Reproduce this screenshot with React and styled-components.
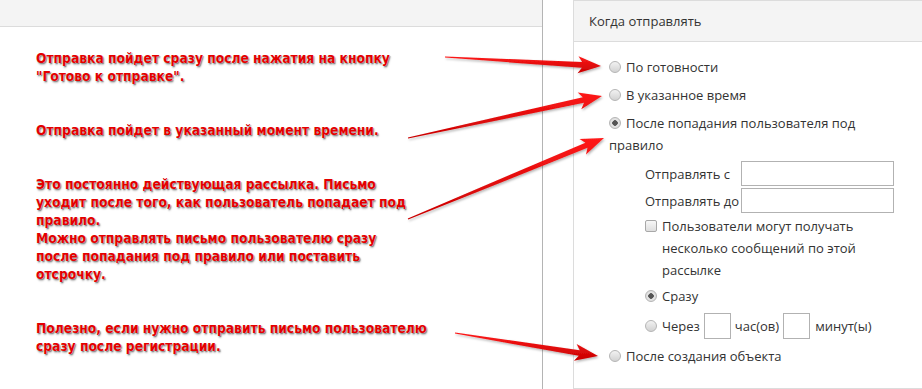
import React from "react";
import styled, { createGlobalStyle } from "styled-components";

const GlobalStyle = createGlobalStyle`
  html, body {
    margin: 0;
    padding: 0;
    background: #fff;
    overflow: hidden;
  }
  body {
    font-family: "Open Sans", "Liberation Sans", sans-serif;
  }
`;

const Page = styled.div`
  position: relative;
  display: flex;
  flex-direction: row;
  width: 922px;
  height: 389px;
  overflow: hidden;
`;

const LeftColumn = styled.div`
  display: flex;
  flex-direction: column;
  width: 542px;
  flex-shrink: 0;
  border-right: 1px solid #b4b4b4;
`;

const TopBand = styled.div`
  height: 26px;
  background: #f4f4f4;
  border-bottom: 1px solid #dcdcdc;
`;

const Notes = styled.div`
  display: flex;
  flex-direction: column;
  gap: 36px;
  padding: 22px 0 0 36px;
`;

const Note = styled.div`
  font-family: "DejaVu Sans Condensed", "Liberation Sans Narrow", "DejaVu Sans", sans-serif;
  font-weight: bold;
  font-size: 13.7px;
  line-height: 18px;
  color: #e30000;
  white-space: nowrap;
  text-shadow: 0 0 1px #fff, 1px 1px 1px rgba(0, 0, 0, 0.4),
    1px 2px 2px rgba(0, 0, 0, 0.25);
`;

const Panel = styled.div`
  margin-left: 30px;
  width: 380px;
  height: 387px;
  flex-shrink: 0;
  border: 1px solid #dcdcdc;
`;

const PanelHeader = styled.div`
  height: 40px;
  display: flex;
  align-items: center;
  padding-left: 15px;
  background: #f4f4f4;
  border-bottom: 1px solid #dcdcdc;
  font-size: 13px;
  color: #333;
`;

const PanelBody = styled.div`
  width: 296px;
  padding: 14px 0 0 35px;
  font-size: 13px;
  line-height: 22px;
  color: #333;
`;

const Option = styled.div`
  margin-bottom: 6px;
  min-height: ${(props) => (props.tall ? `26px` : `22px`)};
  display: ${(props) => (props.tall ? `flex` : `block`)};
  align-items: center;
`;

const Radio = styled.span`
  display: inline-block;
  box-sizing: border-box;
  width: 12px;
  height: 12px;
  margin-right: 5px;
  vertical-align: -1px;
  border-radius: 50%;
  border: 1px solid #b5b5b5;
  background: ${(props) =>
    props.checked
      ? `radial-gradient(circle at 50% 50%, #555 0, #555 2.5px, #e6e6e6 3px, #d4d4d4 100%)`
      : `linear-gradient(#f2f2f2, #d2d2d2)`};
`;

const SubBlock = styled.div`
  padding-left: 36px;
  padding-top: 5px;
`;

const FieldRow = styled.div`
  display: flex;
  align-items: center;
  margin-bottom: 2px;
`;

const FieldLabel = styled.span`
  min-width: 95px;
  white-space: nowrap;
  flex-shrink: 0;
  margin-right: 1px;
`;

const TextBox = styled.div`
  box-sizing: border-box;
  flex-shrink: 0;
  width: ${(props) => props.width || `153px`};
  height: ${(props) => props.height || `25px`};
  border: 1px solid #b2b2b2;
  background: #fff;
  margin: ${(props) => props.margin || `0`};
`;

const CheckRow = styled.div`
  display: flex;
  align-items: flex-start;
  margin-bottom: 4px;
`;

const Check = styled.span`
  box-sizing: border-box;
  flex-shrink: 0;
  width: 12px;
  height: 12px;
  margin: 5px 5px 0 0;
  border: 1px solid #a8a8a8;
  border-radius: 2px;
  background: linear-gradient(#f7f7f7, #dedede);
`;

const CheckText = styled.span`
  flex: 1;
`;

const ArrowLayer = styled.svg`
  position: absolute;
  left: 0;
  top: 0;
  pointer-events: none;
`;

const arrowPoints = (x1, y1, x2, y2) => {
  const dx = x2 - x1;
  const dy = y2 - y1;
  const len = Math.hypot(dx, dy);
  const ux = dx / len;
  const uy = dy / len;
  const nx = -uy;
  const ny = ux;
  const head = 19;
  const pts = [
    [0, -0.6],
    [len - head, -2.8],
    [len - head - 4, -8.5],
    [len, 0],
    [len - head - 4, 8.5],
    [len - head, 2.8],
    [0, 0.6],
  ];
  return pts
    .map(([a, b]) => `${(x1 + ux * a + nx * b).toFixed(1)},${(y1 + uy * a + ny * b).toFixed(1)}`)
    .join(" ");
};

const arrows = [
  [445, 57, 601, 66],
  [408, 138, 602, 96],
  [408, 219, 604, 138],
  [455, 333, 598, 356],
];

const notes = [
  [`Отправка пойдет сразу после нажатия на кнопку`, `"Готово к отправке".`],
  [`Отправка пойдет в указанный момент времени.`],
  [
    `Это постоянно действующая рассылка. Письмо`,
    `уходит после того, как пользователь попадает под`,
    `правило.`,
    `Можно отправлять письмо пользователю сразу`,
    `после попадания под правило или поставить`,
    `отсрочку.`,
  ],
  [`Полезно, если нужно отправить письмо пользователю`, `сразу после регистрации.`],
];

const App = () => {
  return (
    <>
      <GlobalStyle />
      <Page>
        <LeftColumn>
          <TopBand />
          <Notes>
            {notes.map((lines, idx) => (
              <Note key={idx}>
                {lines.map((line, i) => (
                  <React.Fragment key={i}>
                    {line}
                    {i < lines.length - 1 && <br />}
                  </React.Fragment>
                ))}
              </Note>
            ))}
          </Notes>
        </LeftColumn>

        <Panel>
          <PanelHeader>Когда отправлять</PanelHeader>
          <PanelBody>
            <Option>
              <Radio />
              По готовности
            </Option>
            <Option>
              <Radio />
              В указанное время
            </Option>
            <Option>
              <Radio checked />
              После попадания пользователя под правило
              <SubBlock>
                <FieldRow>
                  <FieldLabel>Отправлять с</FieldLabel>
                  <TextBox />
                </FieldRow>
                <FieldRow>
                  <FieldLabel>Отправлять до</FieldLabel>
                  <TextBox />
                </FieldRow>
                <CheckRow>
                  <Check />
                  <CheckText>
                    Пользователи могут получать несколько сообщений по этой
                    рассылке
                  </CheckText>
                </CheckRow>
                <Option>
                  <Radio checked />
                  Сразу
                </Option>
                <Option tall>
                  <Radio />
                  Через
                  <TextBox width={`27px`} height={`26px`} margin={`0 4px 0 4px`} />
                  час(ов)
                  <TextBox width={`27px`} height={`26px`} margin={`0 5px 0 4px`} />
                  минут(ы)
                </Option>
              </SubBlock>
            </Option>
            <Option>
              <Radio />
              После создания объекта
            </Option>
          </PanelBody>
        </Panel>

        <ArrowLayer width="922" height="389" viewBox="0 0 922 389">
          <defs>
            <filter id="arrowShadow" x="-10%" y="-50%" width="120%" height="200%">
              <feDropShadow dx="1" dy="1.5" stdDeviation="1" floodColor="#000" floodOpacity="0.3" />
            </filter>
            <linearGradient id="arrowFill" x1="0" y1="0" x2="0" y2="1">
              <stop offset="0" stopColor="#ff1a1a" />
              <stop offset="1" stopColor="#c80000" />
            </linearGradient>
          </defs>
          {arrows.map(([x1, y1, x2, y2], idx) => (
            <polygon
              key={idx}
              points={arrowPoints(x1, y1, x2, y2)}
              fill="url(#arrowFill)"
              filter="url(#arrowShadow)"
            />
          ))}
        </ArrowLayer>
      </Page>
    </>
  );
};

export default App;
